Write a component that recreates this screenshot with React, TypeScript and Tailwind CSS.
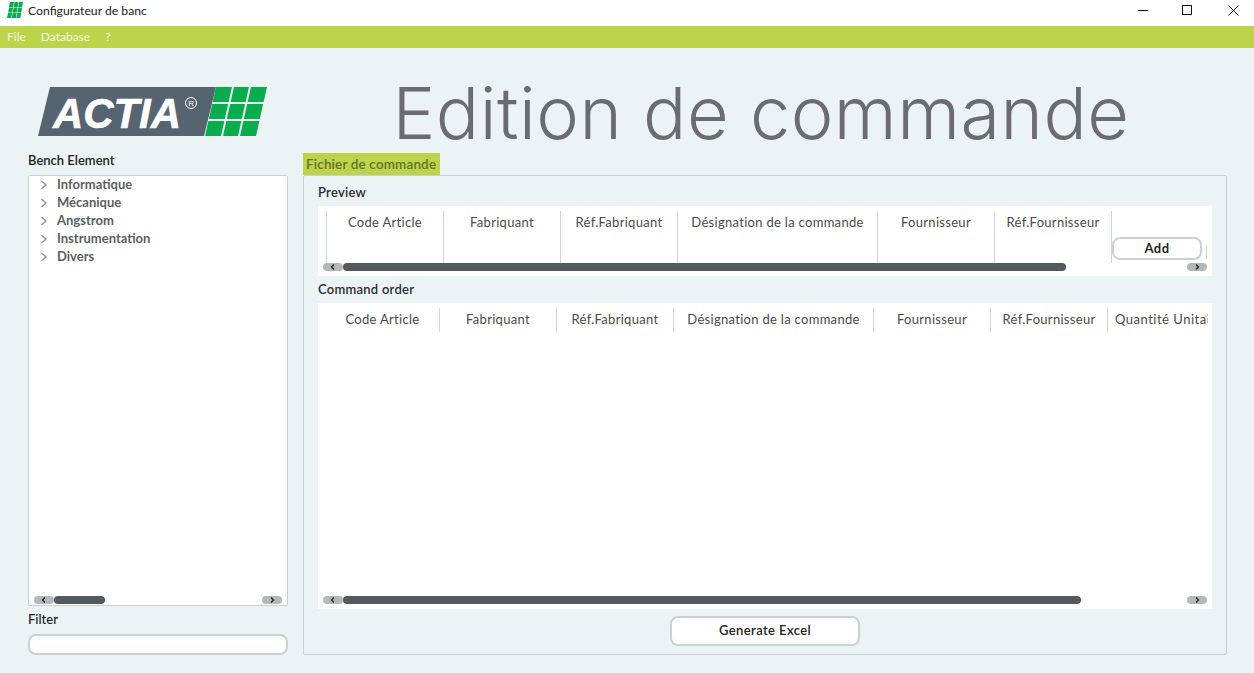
import React from "react";

const geo = "font-['Lato','Inter',sans-serif]";

const rows: [number, number][] = [[0, 15], [17, 32], [34, 49]];
const cols: [number, number][] = [[129, 145], [147, 162], [164, 180]];
const sx = (x: number, y: number) => x + (49 - y) * 0.224;

function Logo() {
  return (
    <svg width="230" height="50" viewBox="0 0 230 50" className="block">
      <polygon points="12,0 178,0 166,49 0,49" fill="#566471" />
      <text x="15" y="41" fontFamily="Liberation Sans, sans-serif" fontWeight="700" fontStyle="italic" fontSize="43" fill="#fff" stroke="#fff" strokeWidth="0.6" textLength="128" lengthAdjust="spacingAndGlyphs">ACTIA</text>
      <circle cx="153" cy="16" r="5.500" fill="none" stroke="#fff" strokeWidth="1" />
      <text x="150.200" y="19" fontFamily="Liberation Sans, sans-serif" fontSize="8" fill="#fff">R</text>
      <g fill="#0bac4e">
        {rows.map(([a, b]) =>
          cols.map(([l, r]) => (
            <polygon
              key={`${a}-${l}`}
              points={`${sx(l + 38, a)},${a} ${sx(r + 38, a)},${a} ${sx(r + 38, b)},${b} ${sx(l + 38, b)},${b}`}
            />
          ))
        )}
      </g>
    </svg>
  );
}

function ScrollBtn({ dir }: { dir: "l" | "r" }) {
  return (
    <div className="w-5 h-2 rounded-full bg-[#b5b8ba] flex items-center justify-center shrink-0">
      <svg width="6" height="6" viewBox="0 0 6 6">
        <path d={dir === "l" ? "M4 .5 1.500 3 4 5.500" : "M2 .5 4.500 3 2 5.500"} fill="none" stroke="#222" strokeWidth="1.300" />
      </svg>
    </div>
  );
}

function Scrollbar({ thumb }: { thumb: string }) {
  return (
    <div className="flex items-center h-2 w-full">
      <ScrollBtn dir="l" />
      <div className={`h-2 rounded-full bg-[#53595c] ${thumb}`} />
      <div className="flex-1" />
      <ScrollBtn dir="r" />
    </div>
  );
}

const headers: [string, string][] = [
  ["Code Article", "w-[117px]"],
  ["Fabriquant", "w-[117px]"],
  ["Réf.Fabriquant", "w-[117px]"],
  ["Désignation de la commande", "w-[200px]"],
  ["Fournisseur", "w-[117px]"],
  ["Réf.Fournisseur", "w-[117px]"],
];

function Cell({ label, width }: { label: string; width: string }) {
  return (
    <div className={`${width} shrink-0 border-r border-[#d0d5d8] text-center text-[13px] leading-[22px] text-[#4a4a4a] whitespace-nowrap ${geo} tracking-[0.3px]`}>
      {label}
    </div>
  );
}

function Tree({ label }: { label: string }) {
  return (
    <div className="flex items-center h-[18px]">
      <svg width="8" height="10" viewBox="0 0 8 10" className="ml-[11px] mr-[9px]">
        <path d="M1.500 1 6 5 1.500 9" fill="none" stroke="#8a8f92" strokeWidth="1.300" />
      </svg>
      <span className={`text-[13px] font-bold text-[#5a5f62] ${geo}`}>{label}</span>
    </div>
  );
}

export default function App() {
  return (
    <div className="w-[1254px] h-[673px] flex flex-col overflow-hidden bg-[#ecf3f5] font-['Open_Sans',sans-serif]">
      <div className="h-[26px] bg-white flex items-start shrink-0">
        <svg width="16" height="16" viewBox="0 0 16 16" className="ml-[7px] mr-[5px] mt-[2px]">
          <g fill="#0bac4e">
            <polygon points="3,0 7,0 6.200,5 2,5" /><polygon points="7.500,0 11.500,0 10.700,5 6.700,5" /><polygon points="12,0 16,0 15.200,5 11.200,5" />
            <polygon points="2,5.500 6.100,5.500 5.300,10.500 1.200,10.500" /><polygon points="6.600,5.500 10.600,5.500 9.800,10.500 5.800,10.500" /><polygon points="11.100,5.500 15.100,5.500 14.300,10.500 10.300,10.500" />
            <polygon points="1.100,11 5.200,11 4.300,16 0,16" /><polygon points="5.700,11 9.700,11 8.800,16 4.800,16" /><polygon points="10.200,11 14.200,11 13.300,16 9.300,16" />
          </g>
        </svg>
        <span className={`text-[12.200px] leading-[22px] text-[#222] ${geo}`}>Configurateur de banc</span>
        <div className="ml-auto flex items-start pt-[5px] pr-[15px] gap-[35px]">
          <svg width="11" height="11" viewBox="0 0 11 11" className="-mr-[1px]"><path d="M1 5.500h10" stroke="#111" strokeWidth="1" /></svg>
          <svg width="11" height="11" viewBox="0 0 11 11"><rect x=".5" y=".5" width="9" height="9" fill="none" stroke="#111" strokeWidth="1" /></svg>
          <svg width="11" height="11" viewBox="0 0 11 11"><path d="M.5.5l10 10M10.500.5l-10 10" stroke="#111" strokeWidth="1" fill="none" /></svg>
        </div>
      </div>
      <div className={`h-[22px] bg-[#bdd44a] flex items-center gap-[15px] pl-[7px] text-[12px] text-[#f3f6e4] shrink-0 ${geo}`}>
        <span>File</span>
        <span>Database</span>
        <span>?</span>
      </div>
      <div className="flex-1 flex gap-[15px] pl-[28px] pr-[27px] pt-[39px] min-h-0">
        <div className="w-[260px] flex flex-col shrink-0">
          <div className="h-[66px] pl-[10px] shrink-0"><Logo /></div>
          <div className={`h-[22px] flex items-start text-[13px] leading-[15px] font-semibold text-[#222] shrink-0 ${geo}`}>Bench Element</div>
          <div className="h-[431px] border border-[#c6d0d6] rounded-[2px] bg-white flex flex-col shrink-0 pb-[1px]">
            <Tree label="Informatique" />
            <Tree label="Mécanique" />
            <Tree label="Angstrom" />
            <Tree label="Instrumentation" />
            <Tree label="Divers" />
            <div className="flex-1" />
            <div className="px-[5px] pb-0">
              <Scrollbar thumb="w-[51px]" />
            </div>
          </div>
          <div className={`h-[28px] flex items-center text-[13px] font-medium text-[#222] shrink-0 ${geo}`}>Filter</div>
          <input className="h-[21px] w-full border-2 border-[#c9d1d5] rounded-[8px] bg-white outline-none shrink-0" />
        </div>
        <div className="flex-1 flex flex-col min-w-0">
          <div className="h-[66px] shrink-0 flex items-start justify-center pr-[8px]">
            <h1 className="text-[72px] leading-[52px] font-light text-[#6c6c70] whitespace-nowrap font-['Inter',sans-serif] tracking-[0.5px]">Edition de commande</h1>
          </div>
          <div className={`h-[22px] w-[137px] bg-[#bdd44a] text-[13.500px] font-semibold text-[#66702f] pl-[3px] flex items-center shrink-0 whitespace-nowrap tracking-[0.15px] ${geo}`}>Fichier de commande</div>
          <div className="h-[480px] border border-[#c6d0d6] rounded-[2px] px-[14px] flex flex-col shrink-0">
            <div className={`h-[30px] pt-[4px] flex items-center text-[13px] font-semibold text-[#2c2c2c] shrink-0 tracking-[0.25px] ${geo}`}>Preview</div>
            <div className="h-[70px] bg-white flex flex-col px-[5px] pt-[5px] shrink-0">
              <div className="h-[52px] flex pl-[3px] shrink-0">
                <div className="border-l border-[#d0d5d8] flex">
                  {headers.map(([l, w]) => <Cell key={l} label={l} width={w} />)}
                </div>
                <div className="w-[95px] flex items-end">
                  <button className={`mb-[3px] w-[90px] h-[23px] border-2 border-[#c9d1d5] rounded-[8px] bg-white text-[13px] font-bold text-[#222] tracking-[0.4px] ${geo}`}>Add</button>
                  <div className="ml-[4px] mb-[5px] h-[13px] border-l border-[#d0d5d8]" />
                </div>
              </div>
              <div className="w-[884px]">
                <Scrollbar thumb="w-[723px]" />
              </div>
            </div>
            <div className={`h-[27px] flex items-center text-[13px] font-semibold text-[#2c2c2c] shrink-0 tracking-[0.25px] ${geo}`}>Command order</div>
            <div className="h-[306px] bg-white flex flex-col px-[5px] pt-[5px] shrink-0 overflow-hidden">
              <div className="h-[24px] flex shrink-0 pl-[3px] overflow-hidden -mr-[1px]">
                {headers.map(([l, w]) => <Cell key={l} label={l} width={l === "Code Article" ? "w-[114px]" : w} />)}
                <div className={`pl-[7px] text-[13px] leading-[22px] text-[#4a4a4a] whitespace-nowrap tracking-[0.5px] ${geo}`}>Quantité Unitaire</div>
              </div>
              <div className="flex-1" />
              <div className="w-[884px] mb-[5px]">
                <Scrollbar thumb="w-[738px]" />
              </div>
            </div>
            <div className="flex-1 flex items-center justify-center pb-[2px]">
              <button className={`w-[190px] h-[30px] border-2 border-[#c9d1d5] rounded-[8px] bg-white text-[13px] font-semibold text-[#222] tracking-[0.4px] ${geo}`}>Generate Excel</button>
            </div>
          </div>
        </div>
      </div>
    </div>
  );
}
